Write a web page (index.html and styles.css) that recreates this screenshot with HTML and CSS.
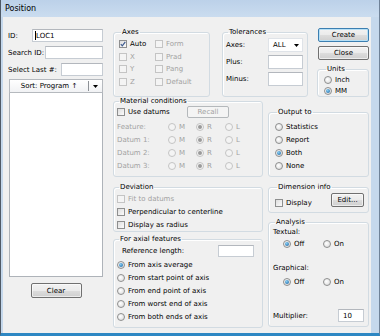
FILE: index.html
```html
<!DOCTYPE html>
<html lang="en">
<head>
    <meta charset="UTF-8">
    <title>Position</title>
    <link rel="stylesheet" href="styles.css">
</head>
<body>

<div class="window">
    <div class="titlebar">Position</div>
    <div class="client">

        <div class="left-col">
            <div class="field-row"><span>ID:</span><div class="textbox id-box"><span class="caret"></span>LOC1</div></div>
            <div class="field-row"><span>Search ID:</span><div class="textbox search-box"></div></div>
            <div class="field-row"><span>Select Last #:</span><div class="textbox last-box"></div></div>
            <div class="sort-header">
                <span class="sort-label">Sort: Program ↑</span>
                <span class="sort-drop"><svg width="5" height="3" viewBox="0 0 5 3"><path d="M0 0h5L2.5 3z" fill="#000"/></svg></span>
            </div>
            <div class="list-box"></div>
            <button class="btn clear-btn">Clear</button>
        </div>

        <div class="right-area">
            <div class="top-row">
                <fieldset class="group axes-group">
                    <legend>Axes</legend>
                    <div class="axes-grid">
                        <div class="opt"><span class="cb"><svg width="6" height="6" viewBox="0 0 6 6"><path d="M0.8 3.2L2.3 4.8L5.3 0.8" fill="none" stroke="#3d5a8f" stroke-width="1.2"/></svg></span>Auto</div>
                        <div class="opt muted"><span class="cb dis"></span>Form</div>
                        <div class="opt muted"><span class="cb dis"></span>X</div>
                        <div class="opt muted"><span class="cb dis"></span>Prad</div>
                        <div class="opt muted"><span class="cb dis"></span>Y</div>
                        <div class="opt muted"><span class="cb dis"></span>Pang</div>
                        <div class="opt muted"><span class="cb dis"></span>Z</div>
                        <div class="opt muted"><span class="cb dis"></span>Default</div>
                    </div>
                </fieldset>

                <fieldset class="group tol-group">
                    <legend>Tolerances</legend>
                    <div class="tol-row">
                        <span>Axes:</span>
                        <div class="combo">ALL<svg width="5" height="3" viewBox="0 0 5 3"><path d="M0 0h5L2.5 3z" fill="#000"/></svg></div>
                    </div>
                    <div class="tol-row"><span>Plus:</span><div class="textbox tol-box"></div></div>
                    <div class="tol-row"><span>Minus:</span><div class="textbox tol-box"></div></div>
                </fieldset>

                <div class="button-col">
                    <button class="btn default-btn">Create</button>
                    <button class="btn close-btn">Close</button>
                    <fieldset class="group units-group">
                        <legend>Units</legend>
                        <div class="opt radio-row"><span class="rb"></span>Inch</div>
                        <div class="opt radio-row"><span class="rb on"></span>MM</div>
                    </fieldset>
                </div>
            </div>

            <div class="bottom-row">
                <div class="mid-col">
                    <fieldset class="group material-group">
                        <legend>Material conditions</legend>
                        <div class="datum-row">
                            <div class="opt"><span class="cb"></span>Use datums</div>
                            <button class="btn recall-btn" disabled>Recall</button>
                        </div>
                        <div class="mc-grid muted">
                            <span>Feature:</span>
                            <div class="opt"><span class="rb dis"></span>M</div>
                            <div class="opt"><span class="rb dis on"></span>R</div>
                            <div class="opt"><span class="rb dis"></span>L</div>
                            <span>Datum 1:</span>
                            <div class="opt"><span class="rb dis"></span>M</div>
                            <div class="opt"><span class="rb dis on"></span>R</div>
                            <div class="opt"><span class="rb dis"></span>L</div>
                            <span>Datum 2:</span>
                            <div class="opt"><span class="rb dis"></span>M</div>
                            <div class="opt"><span class="rb dis on"></span>R</div>
                            <div class="opt"><span class="rb dis"></span>L</div>
                            <span>Datum 3:</span>
                            <div class="opt"><span class="rb dis"></span>M</div>
                            <div class="opt"><span class="rb dis on"></span>R</div>
                            <div class="opt"><span class="rb dis"></span>L</div>
                        </div>
                    </fieldset>

                    <fieldset class="group deviation-group">
                        <legend>Deviation</legend>
                        <div class="opt row13 muted"><span class="cb dis"></span>Fit to datums</div>
                        <div class="opt row13"><span class="cb"></span>Perpendicular to centerline</div>
                        <div class="opt row13"><span class="cb"></span>Display as radius</div>
                    </fieldset>

                    <fieldset class="group axial-group">
                        <legend>For axial features</legend>
                        <div class="ref-row"><span>Reference length:</span><div class="textbox ref-box"></div></div>
                        <div class="opt row13"><span class="rb on"></span>From axis average</div>
                        <div class="opt row13"><span class="rb"></span>From start point of axis</div>
                        <div class="opt row13"><span class="rb"></span>From end point of axis</div>
                        <div class="opt row13"><span class="rb"></span>From worst end of axis</div>
                        <div class="opt row13"><span class="rb"></span>From both ends of axis</div>
                    </fieldset>
                </div>

                <div class="side-col">
                    <fieldset class="group output-group">
                        <legend>Output to</legend>
                        <div class="opt row13"><span class="rb"></span>Statistics</div>
                        <div class="opt row13"><span class="rb"></span>Report</div>
                        <div class="opt row13"><span class="rb on"></span>Both</div>
                        <div class="opt row13"><span class="rb"></span>None</div>
                    </fieldset>

                    <fieldset class="group dim-group">
                        <legend>Dimension info</legend>
                        <div class="dim-row">
                            <div class="opt"><span class="cb"></span>Display</div>
                            <button class="btn edit-btn">Edit...</button>
                        </div>
                    </fieldset>

                    <fieldset class="group analysis-group">
                        <legend>Analysis</legend>
                        <div class="an-label">Textual:</div>
                        <div class="onoff">
                            <div class="opt"><span class="rb on"></span>Off</div>
                            <div class="opt"><span class="rb"></span>On</div>
                        </div>
                        <div class="an-label graphical">Graphical:</div>
                        <div class="onoff">
                            <div class="opt"><span class="rb on"></span>Off</div>
                            <div class="opt"><span class="rb"></span>On</div>
                        </div>
                        <div class="mult-row"><span>Multiplier:</span><div class="textbox mult-box">10</div></div>
                    </fieldset>
                </div>
            </div>
        </div>

    </div>
</div>

</body>
</html>
```

FILE: styles.css
```css
body {
    margin: 0;
    font-family: "DejaVu Sans", sans-serif;
    font-size: 7px;
    color: #000;
}
.window {
    width: 380px;
    height: 336px;
    box-sizing: border-box;
    background-color: #c5d8ec;
    border-left: 1px solid #505a66;
    border-right: 1px solid #6f8298;
    border-bottom: 3px solid #2d87c3;
    display: flex;
    flex-direction: column;
}
.titlebar {
    height: 17px;
    line-height: 17px;
    padding-left: 4px;
    font-size: 8px;
    background: linear-gradient(#bcd1e9, #cadcef);
}
.client {
    flex: 1;
    display: flex;
    margin: 0 8px 0 2px;
    padding: 11px 0 0 5px;
    background-color: #f0f0f0;
}
.muted {
    color: #a2a2a2;
}

/* left column */
.left-col {
    width: 96px;
    padding-top: 1px;
    display: flex;
    flex-direction: column;
}
.field-row {
    display: flex;
    justify-content: space-between;
    align-items: center;
    height: 13px;
    margin-bottom: 4px;
    padding-right: 1px;
    white-space: nowrap;
}
.field-row:nth-child(3) {
    margin-bottom: 3px;
}
.textbox {
    box-sizing: border-box;
    height: 13px;
    flex: none;
    border: 1px solid #c6ccd3;
    border-top-color: #b3b7bd;
    background-color: #fff;
    display: flex;
    align-items: center;
}
.id-box { width: 71px; padding-left: 2px; }
.search-box { width: 58px; }
.last-box { width: 42px; }
.caret {
    width: 1px;
    height: 9px;
    background-color: #000;
}
.sort-header {
    margin: 0 1px;
    height: 14px;
    box-sizing: border-box;
    border: 1px solid #b5b9be;
    background: linear-gradient(#ffffff, #f1f2f4);
    display: flex;
    align-items: center;
}
.sort-label {
    flex: 1;
    text-align: center;
}
.sort-drop {
    width: 13px;
    height: 10px;
    border-left: 1px solid #8d9196;
    display: flex;
    align-items: center;
    justify-content: center;
}
.list-box {
    margin: 0 1px;
    height: 184px;
    box-sizing: border-box;
    border: 1px solid #aeb3b9;
    border-top: none;
    background-color: #fff;
}
.btn {
    box-sizing: border-box;
    height: 14px;
    padding: 0;
    font-family: inherit;
    font-size: 7px;
    color: #000;
    border: 1px solid #707070;
    border-radius: 2px;
    background: linear-gradient(#f2f2f2 0%, #ebebeb 50%, #dddddd 51%, #cfcfcf 100%);
    box-shadow: inset 0 0 0 1px rgba(255, 255, 255, 0.6);
}
.clear-btn {
    width: 51px;
    height: 15px;
    margin-top: 6px;
    align-self: center;
}

/* right area */
.right-area {
    margin-left: 9px;
    width: 256px;
}
.top-row {
    display: flex;
    align-items: flex-start;
    height: 69px;
}
.group {
    margin: 0;
    box-sizing: border-box;
    min-width: 0;
    border: 1px solid #d2dbe2;
    border-radius: 3px;
    box-shadow: inset 1px 1px 0 #fff;
    padding: 0 3px;
}
.group legend {
    padding: 0 1px;
    margin-left: 2px;
    line-height: 9px;
}
.opt {
    display: flex;
    align-items: center;
    gap: 3px;
    white-space: nowrap;
}
.cb {
    width: 8px;
    height: 8px;
    flex: none;
    box-sizing: border-box;
    border: 1px solid #8e8f8f;
    background: linear-gradient(135deg, #dedede, #fbfbfb);
    display: flex;
    align-items: center;
    justify-content: center;
}
.cb.dis {
    border-color: #c4c4c4;
    background: #f4f4f4;
}
.rb {
    width: 8px;
    height: 8px;
    flex: none;
    box-sizing: border-box;
    border: 1px solid #8e8f8f;
    border-radius: 50%;
    background: radial-gradient(circle at 40% 40%, #ffffff, #d6d6d6);
    display: flex;
    align-items: center;
    justify-content: center;
}
.rb.on::after {
    content: "";
    width: 4px;
    height: 4px;
    border-radius: 50%;
    background: radial-gradient(circle at 40% 35%, #86cdf3, #155f9f);
}
.rb.dis {
    border-color: #c4c4c4;
    background: #f4f4f4;
}
.rb.dis.on::after {
    background: #9a9a9a;
}
.row13 {
    height: 13px;
}

.axes-group {
    width: 97px;
    height: 69px;
    padding: 1px 3px 0 5px;
}
.axes-grid {
    display: grid;
    grid-template-columns: 36px 1fr;
    grid-auto-rows: 12.5px;
    align-items: center;
}
.tol-group {
    width: 86px;
    height: 69px;
    margin-left: 12px;
    padding: 1px 4px 0 3px;
}
.tol-row {
    display: flex;
    justify-content: space-between;
    align-items: center;
    height: 14px;
    margin-bottom: 3px;
}
.tol-box {
    width: 35px;
    height: 14px;
}
.combo {
    box-sizing: border-box;
    width: 35px;
    height: 14px;
    padding: 0 3px 0 4px;
    border: 1px solid #dfe3e8;
    background-color: #fff;
    display: flex;
    justify-content: space-between;
    align-items: center;
}
.button-col {
    width: 52px;
    margin-left: 9px;
    display: flex;
    flex-direction: column;
}
.default-btn, .close-btn {
    width: 51px;
    align-self: flex-end;
}
.default-btn {
    border-color: #3c7fb1;
    box-shadow: inset 0 0 0 1px #b7e0f6;
}
.close-btn {
    margin-top: 4px;
}
.units-group {
    height: 32px;
    margin-top: 5px;
    padding: 0 0 0 6px;
}
.radio-row {
    height: 11px;
}

.bottom-row {
    display: flex;
}
.mid-col {
    width: 150px;
    display: flex;
    flex-direction: column;
}
.material-group {
    height: 80px;
}
.datum-row {
    height: 12px;
    display: flex;
    align-items: center;
    justify-content: space-between;
    padding-right: 30px;
}
.recall-btn {
    width: 42px;
    height: 12px;
    color: #a2a2a2;
    border-color: #b4b8bb;
    background: #f4f4f4;
    box-shadow: none;
}
.mc-grid {
    margin-top: 2.5px;
    display: grid;
    grid-template-columns: 51px 28px 29px 1fr;
    grid-auto-rows: 13px;
    align-items: center;
}
.deviation-group {
    height: 49px;
    margin-top: 6px;
}
.axial-group {
    height: 93px;
    margin-top: 3px;
}
.ref-row {
    height: 14px;
    display: flex;
    align-items: center;
    justify-content: space-between;
    padding: 0 5px;
}
.ref-box {
    width: 36px;
    height: 12px;
}

.side-col {
    width: 101px;
    margin-left: 5px;
    display: flex;
    flex-direction: column;
}
.output-group {
    height: 69px;
    margin-top: 11px;
    padding: 3.5px 0 0 6px;
}
.dim-group {
    height: 30px;
    margin-top: 6px;
    padding: 0 4px 0 6px;
}
.dim-row {
    height: 15px;
    display: flex;
    align-items: flex-end;
    justify-content: space-between;
}
.edit-btn {
    width: 33px;
}
.analysis-group {
    height: 109px;
    margin-top: 5px;
    padding: 0 4px 0 4px;
}
.an-label {
    height: 11px;
    line-height: 11px;
}
.an-label.graphical {
    margin-top: 13px;
}
.onoff {
    height: 12px;
    padding-left: 10px;
    display: flex;
    align-items: center;
}
.onoff .opt:first-child {
    width: 40px;
}
.an-label.graphical + .onoff {
    margin-top: 2px;
}
.mult-row {
    margin-top: 21px;
    height: 13px;
    display: flex;
    align-items: center;
    justify-content: space-between;
}
.mult-box {
    width: 26px;
    padding-left: 4px;
}
```
